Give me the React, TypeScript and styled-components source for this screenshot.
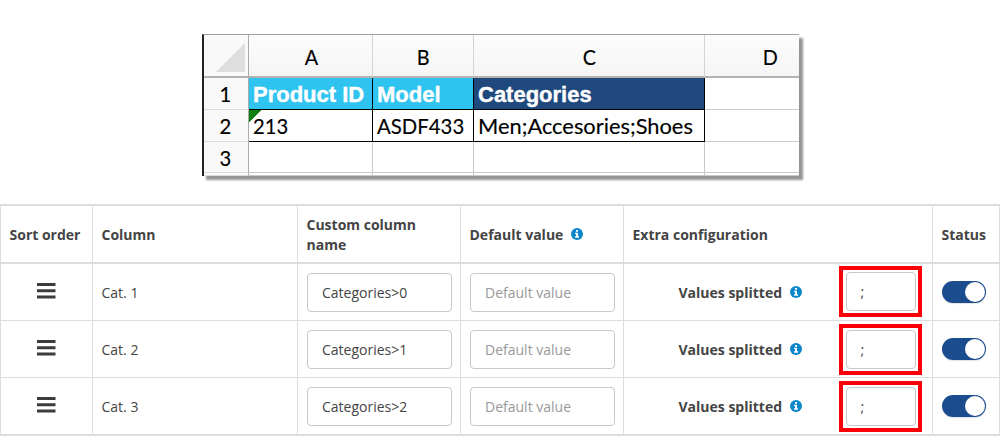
import React from "react";
import styled, { createGlobalStyle } from "styled-components";

const Global = createGlobalStyle`
  * { box-sizing: border-box; }
  body { margin: 0; background: #fff; overflow: hidden; }
`;

const Page = styled.main`
  width: 1000px;
  height: 436px;
  display: flex;
  flex-direction: column;
  justify-content: space-between;
  padding-top: 34px;
  background: #fff;
`;

const Sheet = styled.section`
  width: 597px;
  height: 142px;
  margin-left: 202px;
  display: grid;
  grid-template-columns: 45px 124px 101px 231px 94px;
  grid-template-rows: 43px 32px 32px 31px 3px;
  border-left: 2px solid #222;
  border-top: 1px solid #a0a0a0;
  background: #fff;
  box-shadow: 4px 4px 2px rgba(0, 0, 0, 0.42);
  font-family: Lato, "Liberation Sans", sans-serif;
  font-size: 22px;
  color: #000;
  -webkit-text-stroke: 0.15px #000;
`;

const Value = styled.span<{ $scale?: number }>`
  display: inline-block;
  transform: scaleX(${(p) => p.$scale ?? 1});
  transform-origin: left center;
`;

const HeadCell = styled.div`
  display: flex;
  align-items: center;
  justify-content: center;
  padding: 2px 0 0 1px;
  background: linear-gradient(#fcfcfc, #f5f5f5);
  border-right: 1px solid #d4d4d4;
  border-bottom: 2px solid #b3b3b3;
  ${Value} { transform-origin: center; }
  &:nth-child(5) { border-right: 0; padding-left: 37px; }
`;

const Corner = styled.div`
  display: flex;
  align-items: flex-end;
  justify-content: flex-end;
  padding: 0 3px 4px 0;
  background: #f9f9f9;
  border-right: 1px solid #aaa;
  border-bottom: 2px solid #b3b3b3;
`;

const RowNumber = styled.div`
  display: flex;
  align-items: center;
  justify-content: center;
  padding-right: 1px;
  background: #f9f9f9;
  border-right: 1px solid #aaa;
  border-bottom: 1px solid #dcdcdc;
  overflow: hidden;
  ${Value} { transform-origin: center; }
`;

const Cell = styled.div<{ $fill?: string; $framed?: boolean; $flag?: boolean }>`
  display: flex;
  align-items: center;
  padding-left: 4px;
  white-space: nowrap;
  overflow: hidden;
  background: ${(p) =>
    p.$flag ? "linear-gradient(135deg, #118011 8.5px, transparent 9px)" : p.$fill || "#fff"};
  border-right: ${(p) => (p.$framed ? "1px solid #000" : "1px solid #c9c9c9")};
  border-bottom: ${(p) => (p.$framed ? "1px solid #000" : "1px solid #c9c9c9")};
  &:nth-child(5n) { border-right: 0; }
`;

const Title = styled.span`
  color: #fff;
  font: bold 22px "Liberation Sans", Arial, sans-serif;
  -webkit-text-stroke: 0.4px #fff;
  padding-top: 2px;
`;

const Table = styled.section`
  width: 1000px;
  font: 14px "Open Sans", "Noto Sans", sans-serif;
  color: #444;
  border: 1px solid #dcdcdc;
  border-width: 2px 1px 2px 1px;
`;

const Row = styled.div<{ $head?: boolean }>`
  display: grid;
  grid-template-columns: 92px 205px 163px 163px 309px 66px;
  height: ${(p) => (p.$head ? 58 : 57)}px;
  border-bottom: ${(p) => (p.$head ? 2 : 1)}px solid #dcdcdc;
  font-weight: ${(p) => (p.$head ? 700 : 400)};
  &:last-child { height: 56px; border-bottom: 0; }
`;

const Col = styled.div`
  display: flex;
  align-items: center;
  padding-left: 9px;
  line-height: 20px;
  border-right: 1px solid #dcdcdc;
  &:last-child { border-right: 0; }
`;

const Label = styled.span`
  margin-left: -0.5px;
  padding-top: 2px;
`;

const GripCol = styled(Col)`
  justify-content: center;
  padding: 0 1px 3px 0;
`;

const Input = styled.input<{ $narrow?: boolean }>`
  width: ${(p) => (p.$narrow ? 70 : 144.5)}px;
  height: 39px;
  padding: 0 0 0 14px;
  border: 1px solid #c8c8c8;
  border-radius: 4px;
  background: #fff;
  color: #444;
  font: 14px "Open Sans", "Noto Sans", sans-serif;
  outline: 0;
  &::placeholder { color: #999; opacity: 1; }
`;

const Extra = styled(Col)`
  padding-left: 55px;
  font-weight: 700;
`;

const Highlight = styled.div<{ $first?: boolean }>`
  display: flex;
  align-items: center;
  justify-content: center;
  width: 83px;
  height: 51px;
  margin-left: auto;
  margin-right: 10px;
  margin-bottom: ${(p) => (p.$first ? 1 : 0)}px;
  border: 4px solid #fb0007;
`;

const Switch = styled.div`
  display: flex;
  justify-content: flex-end;
  width: 44px;
  height: 22px;
  padding: 1px;
  border-radius: 11px;
  background: #1a4c8e;
  box-shadow: 0 1px 1px rgba(0, 0, 0, 0.12);
`;

const Knob = styled.span`
  width: 20px;
  height: 20px;
  border-radius: 50%;
  background: #fff;
`;

const InfoSvg = styled.svg`
  margin-left: 7.5px;
  flex: none;
`;

const Info = () => (
  <InfoSvg width="12" height="12" viewBox="0 0 12 12">
    <circle cx="6" cy="6" r="6" fill="#0d87cc" />
    <path d="M5 2h2v1.8H5zM4 4.8h3v3.5h1V9.7H4V8.3h1V6.1H4z" fill="#fff" />
  </InfoSvg>
);

const Grip = () => (
  <svg width="19" height="16" viewBox="0 0 19 16">
    <path d="M0 0h18.5v3H0zM0 6.3h18.5v3H0zM0 12.6h18.5v3H0z" fill="#3c3c3c" />
  </svg>
);

export default function App() {
  return (
    <>
      <Global />
      <Page>
        <Sheet>
          <Corner>
            <svg width="29" height="29" viewBox="0 0 29 29">
              <path d="M29 0v29H0z" fill="#dedede" />
            </svg>
          </Corner>
          <HeadCell><Value $scale={0.9}>A</Value></HeadCell>
          <HeadCell><Value $scale={0.9}>B</Value></HeadCell>
          <HeadCell><Value $scale={0.9}>C</Value></HeadCell>
          <HeadCell><Value $scale={0.9}>D</Value></HeadCell>
          <RowNumber><Value $scale={0.92}>1</Value></RowNumber>
          <Cell $fill="#2fc3ef" $framed><Title>Product ID</Title></Cell>
          <Cell $fill="#2fc3ef" $framed><Title>Model</Title></Cell>
          <Cell $fill="#1f497d" $framed><Title>Categories</Title></Cell>
          <Cell />
          <RowNumber><Value $scale={0.92}>2</Value></RowNumber>
          <Cell $flag $framed><Value $scale={0.92}>213</Value></Cell>
          <Cell $framed><Value $scale={0.925}>ASDF433</Value></Cell>
          <Cell $framed><Value $scale={0.993}>Men;Accesories;Shoes</Value></Cell>
          <Cell />
          <RowNumber><Value $scale={0.92}>3</Value></RowNumber>
          <Cell /><Cell /><Cell /><Cell />
          <RowNumber />
          <Cell /><Cell /><Cell /><Cell />
        </Sheet>
        <Table>
          <Row $head>
            <Col><Label>Sort order</Label></Col>
            <Col><Label>Column</Label></Col>
            <Col><Label>Custom column<br />name</Label></Col>
            <Col><Label>Default value</Label><Info /></Col>
            <Col><Label>Extra configuration</Label></Col>
            <Col><Label>Status</Label></Col>
          </Row>
          {[0, 1, 2].map((i) => (
            <Row key={i}>
              <GripCol><Grip /></GripCol>
              <Col><Label>Cat. {i + 1}</Label></Col>
              <Col><Input defaultValue={`Categories>${i}`} /></Col>
              <Col><Input placeholder="Default value" /></Col>
              <Extra>
                <Label>Values splitted</Label><Info />
                <Highlight $first={i === 0}><Input $narrow defaultValue=";" /></Highlight>
              </Extra>
              <Col><Switch><Knob /></Switch></Col>
            </Row>
          ))}
        </Table>
      </Page>
    </>
  );
}
